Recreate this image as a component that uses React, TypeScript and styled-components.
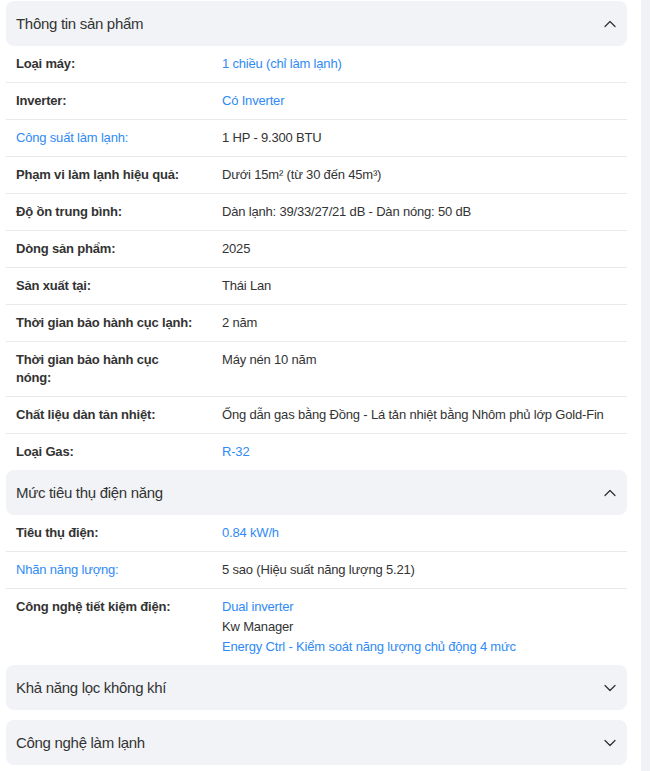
import React, { FC } from "react";
import styled, { createGlobalStyle } from "styled-components";

const GlobalStyle = createGlobalStyle`
  html, body {
    margin: 0;
    padding: 0;
    background: #f1f2f6;
  }
  body {
    font-family: Arial, "Liberation Sans", Helvetica, sans-serif;
    color: #333333;
  }
`;

const Page = styled.div`
  width: 641px;
  min-height: 771px;
  background: #ffffff;
  box-sizing: border-box;
  padding: 1px 14px 0 6px;
`;

const Section = styled.section<{ $open: boolean }>`
  display: flex;
  flex-direction: column;
  margin-bottom: ${(p) => (p.$open ? "0" : "10px")};
`;

const SectionHeader = styled.div`
  display: flex;
  align-items: center;
  justify-content: space-between;
  height: 45px;
  padding: 0 10px;
  background: #f2f3f7;
  border-radius: 8px;
  font-size: 15px;
  letter-spacing: -0.3px;
  color: #333333;
`;

const Chevron = styled.svg`
  width: 12px;
  height: 8px;
  margin-right: 1px;
`;

const Row = styled.div<{ $last?: boolean }>`
  display: flex;
  align-items: flex-start;
  padding: 9px 10px;
  font-size: 13px;
  line-height: 18px;
  letter-spacing: -0.18px;
  border-bottom: ${(p) => (p.$last ? "none" : "1px solid #e8e9ec")};
`;

const Label = styled.div<{ $link?: boolean }>`
  width: 206px;
  box-sizing: border-box;
  flex-shrink: 0;
  padding-right: 26px;
  font-weight: ${(p) => (p.$link ? 400 : 700)};
  color: ${(p) => (p.$link ? "#2f8af5" : "#333333")};
`;

const Values = styled.div`
  display: flex;
  flex-direction: column;
  gap: 2px;
`;

const Value = styled.span<{ $link?: boolean }>`
  color: ${(p) => (p.$link ? "#2f8af5" : "#333333")};
`;

type Val = { text: string; link?: boolean };
type Spec = { label: string; labelLink?: boolean; values: Val[] };

const sections: { title: string; open: boolean; rows: Spec[] }[] = [
  {
    title: "Thông tin sản phẩm",
    open: true,
    rows: [
      { label: "Loại máy:", values: [{ text: "1 chiều (chỉ làm lạnh)", link: true }] },
      { label: "Inverter:", values: [{ text: "Có Inverter", link: true }] },
      { label: "Công suất làm lạnh:", labelLink: true, values: [{ text: "1 HP - 9.300 BTU" }] },
      { label: "Phạm vi làm lạnh hiệu quả:", values: [{ text: "Dưới 15m² (từ 30 đến 45m³)" }] },
      { label: "Độ ồn trung bình:", values: [{ text: "Dàn lạnh: 39/33/27/21 dB - Dàn nóng: 50 dB" }] },
      { label: "Dòng sản phẩm:", values: [{ text: "2025" }] },
      { label: "Sản xuất tại:", values: [{ text: "Thái Lan" }] },
      { label: "Thời gian bảo hành cục lạnh:", values: [{ text: "2 năm" }] },
      { label: "Thời gian bảo hành cục nóng:", values: [{ text: "Máy nén 10 năm" }] },
      {
        label: "Chất liệu dàn tản nhiệt:",
        values: [{ text: "Ống dẫn gas bằng Đồng - Lá tản nhiệt bằng Nhôm phủ lớp Gold-Fin" }],
      },
      { label: "Loại Gas:", values: [{ text: "R-32", link: true }] },
    ],
  },
  {
    title: "Mức tiêu thụ điện năng",
    open: true,
    rows: [
      { label: "Tiêu thụ điện:", values: [{ text: "0.84 kW/h", link: true }] },
      { label: "Nhãn năng lượng:", labelLink: true, values: [{ text: "5 sao (Hiệu suất năng lượng 5.21)" }] },
      {
        label: "Công nghệ tiết kiệm điện:",
        values: [
          { text: "Dual inverter", link: true },
          { text: "Kw Manager" },
          { text: "Energy Ctrl - Kiểm soát năng lượng chủ động 4 mức", link: true },
        ],
      },
    ],
  },
  { title: "Khả năng lọc không khí", open: false, rows: [] },
  { title: "Công nghệ làm lạnh", open: false, rows: [] },
];

const ChevronIcon: FC<{ up: boolean }> = ({ up }) => (
  <Chevron viewBox="0 0 12 8" fill="none">
    <path
      d={up ? "M1 6.5 L6 1.5 L11 6.5" : "M1 1.5 L6 6.5 L11 1.5"}
      stroke="#333"
      strokeWidth="1.3"
      strokeLinecap="round"
      strokeLinejoin="round"
    />
  </Chevron>
);

const App: FC = () => {
  return (
    <>
      <GlobalStyle />
      <Page>
        {sections.map((s) => (
          <Section key={s.title} $open={s.open}>
            <SectionHeader>
              <span>{s.title}</span>
              <ChevronIcon up={s.open} />
            </SectionHeader>
            {s.open &&
              s.rows.map((r, i) => (
                <Row key={r.label} $last={i === s.rows.length - 1}>
                  <Label $link={r.labelLink}>{r.label}</Label>
                  <Values>
                    {r.values.map((v) => (
                      <Value key={v.text} $link={v.link}>
                        {v.text}
                      </Value>
                    ))}
                  </Values>
                </Row>
              ))}
          </Section>
        ))}
      </Page>
    </>
  );
};

export default App;
